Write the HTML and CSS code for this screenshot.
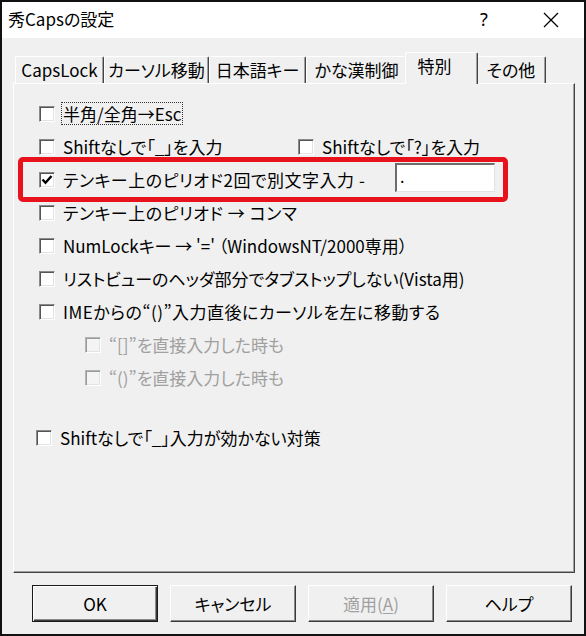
FILE: index.html
```html
<!DOCTYPE html>
<html lang="ja">
<head>
<meta charset="utf-8">
<title>秀Capsの設定</title>
<link rel="stylesheet" href="styles.css">
</head>
<body>
<div class="window">
  <div class="titlebar">
    <span class="title">秀Capsの設定</span>
    <span class="help-btn">?</span>
    <span class="close-btn"><svg width="16" height="16" viewBox="0 0 16 16"><path d="M1 1 L15 15 M15 1 L1 15" stroke="#000" stroke-width="1.3" fill="none"/></svg></span>
  </div>
  <div class="tabs">
    <div class="tab t1">CapsLock</div>
    <div class="tab t2">カーソル移動</div>
    <div class="tab t3">日本語キー</div>
    <div class="tab t4">かな漢制御</div>
    <div class="tab t5 active">特別</div>
    <div class="tab t6">その他</div>
  </div>
  <div class="panel">
    <div class="row">
      <span class="box"></span><span class="label focus">半角/全角→Esc</span>
    </div>
    <div class="row">
      <span class="item col1"><span class="box"></span><span class="label">Shiftなしで「_」を入力</span></span>
      <span class="item"><span class="box"></span><span class="label">Shiftなしで「?」を入力</span></span>
    </div>
    <div class="row marked">
      <span class="item wide"><span class="box checked"><svg width="14" height="14" viewBox="0 0 14 14"><path d="M2.5 6.5 L5.5 9.8 L11.5 3" stroke="#000" stroke-width="2.4" fill="none"/></svg></span><span class="label spaced">テンキー上のピリオド2回で別文字入力 -</span></span>
      <span class="textbox">.</span>
      <span class="highlight"></span>
    </div>
    <div class="row">
      <span class="box"></span><span class="label spaced">テンキー上のピリオド → コンマ</span>
    </div>
    <div class="row">
      <span class="box"></span><span class="label">NumLockキー → '=' （WindowsNT/2000専用）</span>
    </div>
    <div class="row">
      <span class="box"></span><span class="label">リストビューのヘッダ部分でタブストップしない(Vista用)</span>
    </div>
    <div class="row">
      <span class="box"></span><span class="label spaced">IMEからの“()”入力直後にカーソルを左に移動する</span>
    </div>
    <div class="row sub disabled">
      <span class="box"></span><span class="label">“[]”を直接入力した時も</span>
    </div>
    <div class="row sub disabled">
      <span class="box"></span><span class="label">“()”を直接入力した時も</span>
    </div>
    <div class="row last">
      <span class="box"></span><span class="label">Shiftなしで「_」入力が効かない対策</span>
    </div>
  </div>
  <div class="buttons">
    <div class="btn default">OK</div>
    <div class="btn">キャンセル</div>
    <div class="btn off">適用(<u>A</u>)</div>
    <div class="btn">ヘルプ</div>
  </div>
</div>
</body>
</html>
```

FILE: styles.css
```css
* { box-sizing: border-box; }
html, body { margin: 0; padding: 0; }
body {
  width: 586px;
  height: 636px;
  overflow: hidden;
  font-family: "Noto Sans CJK JP", "Noto Sans", sans-serif;
  font-feature-settings: "palt";
  color: #000;
  background: #f0f0f0;
}
.window {
  width: 586px;
  height: 636px;
  border: 2px solid #111;
  background: #f0f0f0;
  display: flex;
  flex-direction: column;
}
.titlebar {
  height: 36px;
  flex: none;
  background: #fff;
  display: flex;
  align-items: center;
  padding: 0 0 3px 6px;
}
.title { flex: 1; font-size: 17px; }
.help-btn {
  width: 60px;
  margin-right: 4px;
  text-align: center;
  font-family: "Noto Sans", sans-serif;
  font-size: 18px;
}
.close-btn {
  width: 66px;
  display: flex;
  justify-content: center;
  padding-top: 2px;
}
.tabs {
  height: 45px;
  flex: none;
  display: flex;
  align-items: flex-end;
  padding: 14px 0 0 13px;
}
.tab {
  height: 27px;
  line-height: 25px;
  font-size: 17px;
  text-align: center;
  white-space: nowrap;
  background: #f0f0f0;
  border-top: 1px solid #fff;
  border-left: 1px solid #fff;
  border-right: 1px solid #444;
  box-shadow: inset -1px 0 #a0a0a0;
  border-top-left-radius: 2px;
  border-top-right-radius: 2px;
}
.t1 { width: 89px; }
.t2 { width: 105px; }
.t3 { width: 97px; }
.t4 { width: 101px; }
.t5 { width: 73px; }
.t6 { width: 70px; }
.tab.active {
  position: relative;
  z-index: 1;
  height: 32px;
  margin: 0 -2px -1px;
  padding-right: 14px;
  line-height: 25px;
}
.panel {
  margin-left: 11px;
  width: 562px;
  height: 490px;
  flex: none;
  border-top: 1px solid #fff;
  border-left: 1px solid #fff;
  border-right: 1px solid #444;
  border-bottom: 1px solid #444;
  box-shadow: inset -1px -1px #a0a0a0;
  padding-top: 13px;
}
.row {
  height: 33px;
  display: flex;
  align-items: center;
  padding-left: 25px;
  font-size: 17px;
  white-space: nowrap;
}
.item { display: flex; align-items: center; }
.col1 { width: 259px; }
.wide { width: 356px; }
.box {
  width: 16px;
  height: 16px;
  flex: none;
  background: #fff;
  border-top: 1px solid #8a8a8a;
  border-left: 1px solid #8a8a8a;
  border-right: 1px solid #fff;
  border-bottom: 1px solid #fff;
  box-shadow: inset 1px 1px #555, inset -1px -1px #e3e3e3;
  margin-right: 8px;
  display: flex;
  align-items: center;
  justify-content: center;
}
.label { line-height: 21px; }
.spaced { letter-spacing: 0.5px; }
.focus {
  outline: 1px dotted #333;
  padding: 0 1px;
  margin-left: -1px;
}
.marked { position: relative; }
.textbox {
  align-self: flex-start;
  width: 100px;
  height: 29px;
  background: #fff;
  border-top: 2px solid #6d6d6d;
  border-left: 2px solid #6d6d6d;
  border-right: 1px solid #e3e3e3;
  border-bottom: 1px solid #e3e3e3;
  font-size: 16px;
  line-height: 22px;
  padding-left: 3px;
}
.highlight {
  position: absolute;
  left: 4px;
  top: -6px;
  width: 490px;
  height: 45px;
  border: 5px solid #e8121c;
  border-radius: 5px;
}
.sub { padding-left: 71px; }
.disabled .box {
  background: #f4f4f4;
  border-top-color: #b4b4b4;
  border-left-color: #b4b4b4;
  box-shadow: inset 1px 1px #9a9a9a, inset -1px -1px #e3e3e3;
}
.disabled .label { color: #a0a0a0; }
.last { margin-top: 27px; padding-left: 22px; }
.buttons {
  margin-top: 12px;
  display: flex;
  justify-content: flex-end;
  gap: 12px;
  padding-right: 12px;
}
.btn {
  width: 126px;
  height: 37px;
  display: flex;
  align-items: center;
  justify-content: center;
  font-size: 17px;
  background: #f0f0f0;
  border-top: 1px solid #fff;
  border-left: 1px solid #fff;
  border-right: 1px solid #3a3a3a;
  border-bottom: 1px solid #3a3a3a;
  box-shadow: inset -1px -1px #8a8a8a;
}
.btn.default {
  border: 1px solid #1a1a1a;
  box-shadow: inset 1px 1px #fff, inset -1px -1px #3a3a3a, inset -2px -2px #8a8a8a;
}
.btn.off { color: #a0a0a0; }
.btn u { text-underline-offset: 2px; }
```
